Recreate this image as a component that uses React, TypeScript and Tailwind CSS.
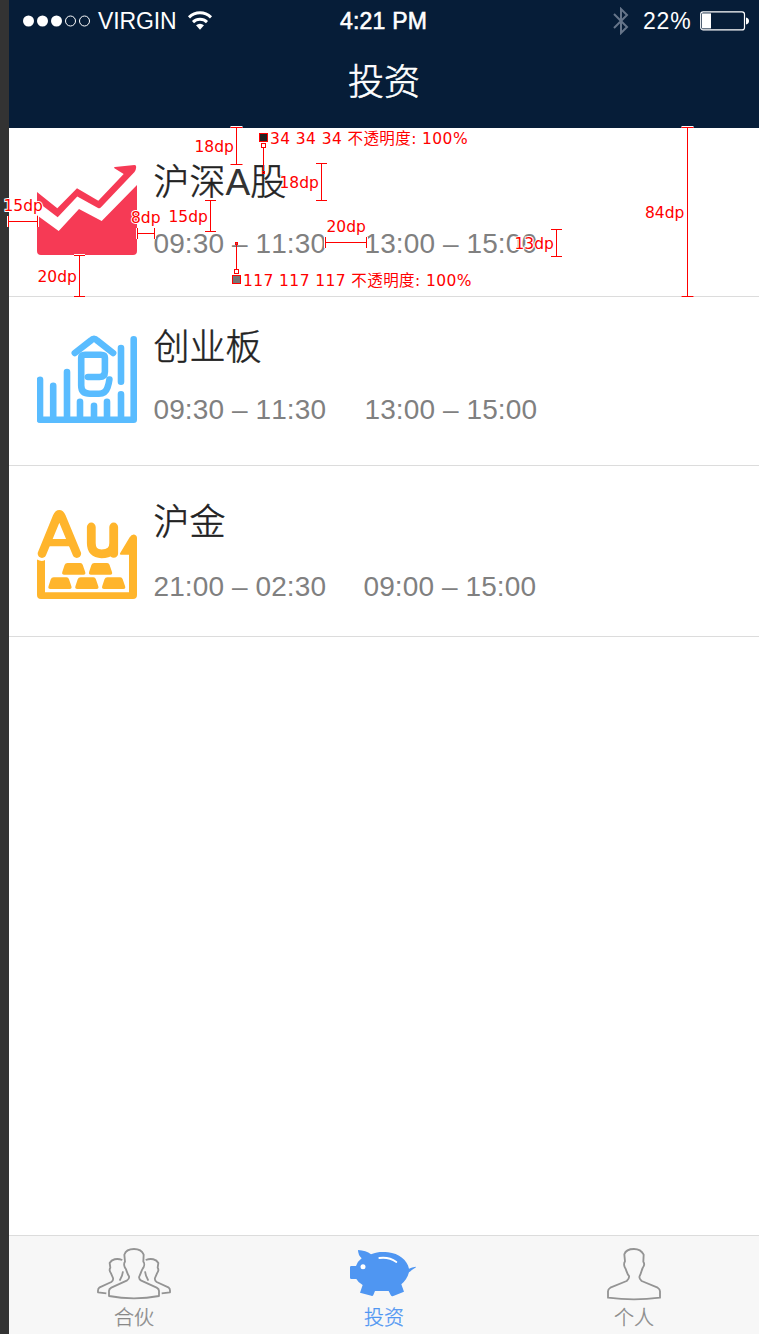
import type { ReactNode } from 'react';

const latin = "font-['Liberation_Sans','Noto_Sans_CJK_SC',sans-serif]";
const cjk = "font-['Noto_Sans_CJK_SC',sans-serif]";

function StatusBar() {
  return (
    <div className={`flex h-[42px] items-center text-white ${latin}`}>
      <div className="flex w-[331px] items-center pl-[14px]">
        <svg width="68" height="12" viewBox="0 0 68 12" fill="#fff">
          <circle cx="5.5" cy="6" r="5.5" />
          <circle cx="19.5" cy="6" r="5.5" />
          <circle cx="33.5" cy="6" r="5.5" />
          <circle cx="47.5" cy="6" r="5" fill="none" stroke="#fff" />
          <circle cx="61.5" cy="6" r="5" fill="none" stroke="#fff" />
        </svg>
        <span className="ml-[7px] w-[80px] text-[23px] leading-[42px] tracking-[-0.1px]">VIRGIN</span>
        <svg className="ml-[9px]" width="26" height="20" viewBox="0 0 26 20" fill="none" stroke="#fff" strokeWidth="3">
          <path d="M2 6.3C8.3 .3 17.7 .3 24 6.3M6 11.1C10 7.4 16 7.4 20 11.1" />
          <path d="M9 14.2C11.5 12.2 14.5 12.2 17 14.2L13 18.8Z" fill="#fff" stroke="none" />
        </svg>
      </div>
      <span className="w-[273px] text-[23px] leading-[42px] tracking-[0.2px] [-webkit-text-stroke:0.6px_white]">4:21 PM</span>
      <svg width="17" height="28" viewBox="0 0 17 28" fill="none" stroke="#66758a" strokeWidth="2">
        <path d="M1 7L14 20L8 26V2L14 8L1 21" />
      </svg>
      <span className="ml-[13px] w-[52px] text-[23px] leading-[42px] tracking-[0.8px]">22%</span>
      <svg className="ml-[5px]" width="50" height="20" viewBox="0 0 50 20">
        <rect x=".7" y=".9" width="43.8" height="18" rx="2.5" fill="none" stroke="#fff" strokeWidth="1.2" />
        <rect x="2" y="2.4" width="9" height="15" fill="#fff" />
        <path d="M46 6.5C50 7.2 50 12.8 46 13.5Z" fill="#fff" />
      </svg>
    </div>
  );
}

function StockIcon() {
  return (
    <svg width="100" height="92" viewBox="37 164 100 92" fill="#f63a55">
      <path d="M37 192L57.3 208.3L77 188.3L98.3 200.7L123.7 174L114.8 168.6Q113.2 167.3 115 167L134.5 165Q136.3 165 136.2 167Q136 170 134.5 172L101 207.3Q99.7 209 98 208L77.3 196.5L57.7 217.3L37 201.5Z" />
      <path d="M37 215.3L58.7 231L79 209L101.7 221L137 185V251Q137 255 133 255H41Q37 255 37 251Z" />
    </svg>
  );
}

function StartupIcon() {
  return (
    <svg width="100" height="92" viewBox="37 332 100 92" fill="none" stroke="#59bcff" strokeWidth="6.6" strokeLinecap="round" strokeLinejoin="round">
      <path d="M40 379.8V419.7H133.7V339.3M53.2 385.7V418M67 372V418M80 401.8V418M94 405.8V418M107 401.8V418M121 394.3V418M121 348V381.8" />
      <path d="M74.8 353L91 340.4Q94 337 97 340.4L113.1 353" />
      <path d="M81.2 366V357.8Q81.2 354.8 85 354.8H100.8Q104.9 354.8 104.9 357.8V371.7Q104.9 377 99.5 377H88M81.2 362V385.5Q81.2 393.7 90 393.7H99Q105.5 393.7 107.5 387.5Q109 383 109.4 379.5" />
    </svg>
  );
}

function GoldIcon() {
  return (
    <svg width="100" height="92" viewBox="37 508 100 92" fill="#ffb52c">
      <g fill="none" stroke="#ffb52c" strokeLinecap="round" strokeLinejoin="round">
        <path strokeWidth="8.6" d="M42 553.6L57 517Q59.3 511.6 61.6 517L76.8 553.6" />
        <path strokeWidth="7.4" d="M47 542.6H72" />
        <path strokeWidth="8.8" d="M91.3 527V543Q91.3 553.8 101.5 553.8Q113.7 553.8 113.7 543V527V553.4" />
      </g>
      <path d="M37 559.5Q41.5 562 45 560V592.3H129V554.7H121Q119 554.7 120.5 552.5L129.5 537.5Q131.5 534.3 134 534.5Q137 535 137 538V595Q137 599 133 599H41Q37 599 37 595Z" />
      {[[62, 563], [88.8, 563], [48.2, 577.2], [75.1, 577.2], [101.9, 577.2]].map(([x, y]) => (
        <path key={`${x}-${y}`} transform={`translate(${x} ${y})`} d="M5.5 0H18.3Q20.2 0 20.8 2L23.2 9Q24 11.7 21.5 11.7H2.2Q-.5 11.7 .3 9L2.6 2Q3.3 0 5.5 0Z" />
      ))}
    </svg>
  );
}

type Market = { name: ReactNode; first: string; second: string; icon: ReactNode; row: string; iconPad: string; gap: string; textPad: string; secondLeft: string };

const markets: Market[] = [
  { name: <>沪深<span className="text-[37px] font-['Liberation_Sans',sans-serif] text-[#333] [-webkit-text-stroke:0px]">A</span>股</>, first: '09:30 – 11:30', second: '13:00 – 15:00', icon: <StockIcon />, row: 'h-[169px]', iconPad: 'pt-[36px]', textPad: 'pt-[33px]', gap: 'mt-[26px]', secondLeft: 'ml-[38px]' },
  { name: '创业板', first: '09:30 – 11:30', second: '13:00 – 15:00', icon: <StartupIcon />, row: 'h-[169px]', iconPad: 'pt-[35px]', textPad: 'pt-[29px]', gap: 'mt-[27px]', secondLeft: 'ml-[38px]' },
  { name: '沪金', first: '21:00 – 02:30', second: '09:00 – 15:00', icon: <GoldIcon />, row: 'h-[171px]', iconPad: 'pt-[42px]', textPad: 'pt-[35px]', gap: 'mt-[29px]', secondLeft: 'ml-[37px]' },
];

function MarketRow({ m }: { m: Market }) {
  return (
    <div className={`flex border-b border-[#dcdcdc] pl-[28px] ${m.row}`}>
      <div className={`w-[116px] ${m.iconPad}`}>{m.icon}</div>
      <div className={m.textPad}>
        <div className={`ml-[0.5px] h-[36px] whitespace-nowrap text-[36px] font-light leading-[36px] text-[#222] [-webkit-text-stroke:0.5px_#222] ${cjk}`}>{m.name}</div>
        <div className={`ml-[0.5px] flex h-[42px] text-[28px] leading-[42px] tracking-[0.1px] text-[#808080] [font-kerning:none] ${latin} ${m.gap}`}>
          <span className="w-[173px] whitespace-nowrap">{m.first}</span>
          <span className={`whitespace-nowrap ${m.secondLeft}`}>{m.second}</span>
        </div>
      </div>
    </div>
  );
}

const headPath = 'M132 57C119 57 107 60 103 73L105 94C100 100 103 112 106 115C109 120 111 132 117 138Q119 145 110 153L61 173Q53 178 54 186V203Q94 208 132 208T210 203V186Q211 178 203 173L155 153Q146 145 149 138C153 132 155 120 158 114C162 109 164 101 160 95L161 74C156 64 146 57 132 57Z';

function PersonIcon() {
  return (
    <svg width="110" height="72" viewBox="-33 0 330 216" fill="none" stroke="#949494" strokeWidth="5.5" strokeLinejoin="round">
      <path d={headPath} />
    </svg>
  );
}

function PartnersIcon() {
  return (
    <svg width="110" height="72" viewBox="-3 0 330 216" fill="none" stroke="#949494" strokeWidth="5.5" strokeLinejoin="round">
      <path d="M162 57C148 57 137 62 133 74L135 95C130 101 133 112 137 116C140 122 142 132 147 139Q149 146 140 152L94 173Q86 177 87 185V198Q123 205 162 205T237 198V185Q238 177 230 173L184 152Q175 146 178 139C182 132 184 122 188 116C192 111 195 101 190 95L191 74C187 64 177 57 162 57Z" />
      <path d="M127 90C111 84 95 87 89 99L91 113C86 121 90 126 93 130L99 144Q101 151 94 156L59 172Q53 176 54 185V187L79 190M129 124L126 137L119 152M197 90C213 84 229 87 235 99L233 113C238 121 234 126 231 130L225 144Q223 151 230 156L265 172Q271 176 270 185V187L245 190M195 124L198 137L205 152" />
    </svg>
  );
}

function PigIcon() {
  return (
    <svg width="110" height="72" viewBox="0 0 330 216" fill="#4f96f2">
      <path d="M87 60Q111 61 126 73C145 65 161 66 177 67C210 70 235 91 240 116Q249 112 260 110L261 112Q250 119 240 127Q234 149 217 163L225 185L193 198Q188 200 185 195L179 183H138L133 195Q131 199 127 197L93 188L101 165Q87 157 82 147H67Q63 147 63 143V112Q63 108 67 108H81Q86 94 98 85Q87 75 87 60Z" />
      <circle cx="102" cy="110" r="7.5" fill="#fff" />
      <path d="M151 84Q180 80 202 96" fill="none" stroke="#fff" strokeWidth="5.5" strokeLinecap="round" />
    </svg>
  );
}

function Tab({ icon, label, color }: { icon: ReactNode; label: string; color: string }) {
  return (
    <div className="flex w-[250px] flex-col items-center">
      <div className="-mt-[6px] h-[72px]">{icon}</div>
      <span className={`mt-[3px] text-[20px] font-light leading-[24px] [-webkit-text-stroke:0.3px_currentColor] ${cjk} ${color}`}>{label}</span>
    </div>
  );
}

const measures = [
  'M236.5 127V164M230.5 127.5H242.5M230.5 164.5H242.5',
  'M321.5 163V200M316 163.5H327M316 200.5H327',
  'M210.5 201V231M205 200.5H216M205 231.5H216',
  'M8 221.5H38M8.5 216V227M37.5 216V227',
  'M137 233.5H155M137.5 228V239M154.5 228V239',
  'M79.5 255V296M74 255.5H85M74 296.5H85',
  'M325 242.5H367M325.5 237V248M366.5 237V248',
  'M556.5 229V256M551 229.5H562M551 256.5H562',
  'M687.5 127V296M681.5 127.5H693.5M681.5 296.5H693.5',
];

function Note({ at, children }: { at: string; children: ReactNode }) {
  return (
    <span className={`absolute whitespace-nowrap font-['DejaVu_Sans','Noto_Sans_CJK_SC',sans-serif] text-[15.5px] leading-[20px] text-[#f00] [-webkit-text-stroke:2px_white] [paint-order:stroke_fill] ${at}`}>
      {children}
    </span>
  );
}

function Annotations() {
  return (
    <div className="pointer-events-none absolute inset-0">
      <svg className="absolute left-0 top-0" width="759" height="310" viewBox="0 0 759 310" fill="none">
        <path d={measures.join('')} stroke="#fff" strokeWidth="3" />
        <path d={measures.join('')} stroke="#f00" />
        <path d="M263.5 148V170M236.5 245V269" stroke="#f00" />
        <rect x="259.5" y="133.5" width="8" height="8" fill="#222" stroke="#f00" />
        <rect x="232.5" y="275.5" width="8" height="8" fill="#757575" stroke="#f00" />
        <rect x="261.5" y="143.5" width="4" height="4" fill="#fff" stroke="#f00" />
        <rect x="234.5" y="269.5" width="4" height="4" fill="#fff" stroke="#f00" />
        <rect x="262.5" y="171.5" width="2" height="2" fill="#222" stroke="#f00" />
        <rect x="235.5" y="242.5" width="2" height="2" fill="#757575" stroke="#f00" />
      </svg>
      <Note at="left-[194.5px] top-[137px]">18dp</Note>
      <Note at="left-[270px] top-[129px] tracking-[0.4px]">34 34 34 不透明度: 100%</Note>
      <Note at="left-[279.5px] top-[173px]">18dp</Note>
      <Note at="left-[3.5px] top-[196px]">15dp</Note>
      <Note at="left-[131px] top-[208px]">8dp</Note>
      <Note at="left-[168.5px] top-[207px]">15dp</Note>
      <Note at="left-[326.5px] top-[217px]">20dp</Note>
      <Note at="left-[514.5px] top-[234px]">13dp</Note>
      <Note at="left-[37.5px] top-[267px]">20dp</Note>
      <Note at="left-[243px] top-[271px] tracking-[0.4px]">117 117 117 不透明度: 100%</Note>
      <Note at="left-[645px] top-[203px]">84dp</Note>
    </div>
  );
}

export default function App() {
  return (
    <div className="relative flex h-[1334px] w-[759px] overflow-hidden bg-white">
      <aside className="w-[9px] shrink-0 bg-[#333]" />
      <main className="flex w-[750px] flex-col">
        <header className="h-[128px] bg-[#061d38]">
          <StatusBar />
          <h1 className={`mt-[12px] text-center text-[36px] font-light leading-[50px] text-white [-webkit-text-stroke:0.6px_white] ${cjk}`}>投资</h1>
        </header>
        <section className="flex-1">
          {markets.map((m, i) => <MarketRow key={i} m={m} />)}
        </section>
        <nav className="flex h-[99px] border-t border-[#dcdcdc] bg-[#f7f7f7]">
          <Tab icon={<PartnersIcon />} label="合伙" color="text-[#888]" />
          <Tab icon={<PigIcon />} label="投资" color="text-[#4f96f2]" />
          <Tab icon={<PersonIcon />} label="个人" color="text-[#888]" />
        </nav>
      </main>
      <Annotations />
    </div>
  );
}
